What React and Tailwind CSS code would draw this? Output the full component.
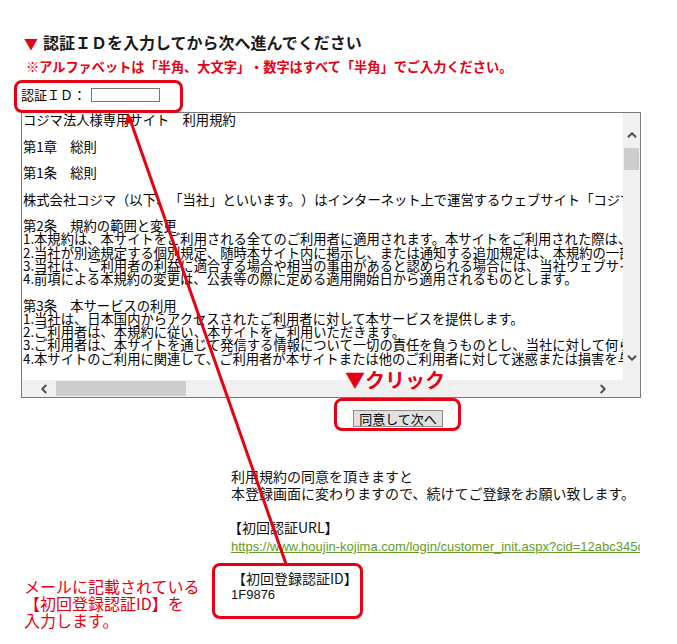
import React from "react";
import { ChevronUp, ChevronDown, ChevronLeft, ChevronRight } from "lucide-react";

const jp = { fontFamily: '"Noto Sans CJK JP", "Noto Sans", sans-serif' };

const terms = [
  "コジマ法人様専用サイト　利用規約",
  "",
  "第1章　総則",
  "",
  "第1条　総則",
  "",
  "株式会社コジマ（以下、「当社」といいます。）はインターネット上で運営するウェブサイト「コジマ法人様専用サイト」",
  "",
  "第2条　規約の範囲と変更",
  "1.本規約は、本サイトをご利用される全てのご利用者に適用されます。本サイトをご利用された際は、本規約に同意したものとみなします。",
  "2.当社が別途規定する個別規定、随時本サイト内に掲示し、または通知する追加規定は、本規約の一部を構成するものとします。",
  "3.当社は、ご利用者の利益に適合する場合や相当の事由があると認められる場合には、当社ウェブサイトへの掲示により本規約を変更します。",
  "4.前項による本規約の変更は、公表等の際に定める適用開始日から適用されるものとします。",
  "",
  "第3条　本サービスの利用",
  "1.当社は、日本国内からアクセスされたご利用者に対して本サービスを提供します。",
  "2.ご利用者は、本規約に従い、本サイトをご利用いただきます。",
  "3.ご利用者は、本サイトを通じて発信する情報について一切の責任を負うものとし、当社に対して何らの迷惑も及ぼさないものとします。",
  "4.本サイトのご利用に関連して、ご利用者が本サイトまたは他のご利用者に対して迷惑または損害を与えた場合",
];

const TermsBox = () => (
  <div className="w-[620px] h-[286px] border border-[#7a7a7a] grid grid-cols-[1fr_17px] grid-rows-[1fr_17px] bg-white">
    <div className="overflow-hidden pl-[1px] text-[13.3px] leading-[13.25px] text-black whitespace-nowrap" style={jp}>
      {terms.map((line, i) => (
        <div key={i} className="h-[13.25px]">
          {line}
        </div>
      ))}
    </div>
    <div className="bg-[#f0f0f0] flex flex-col items-center pt-[15px] pb-[15px]">
      <ChevronUp size={14} strokeWidth={3.5} className="text-[#505050]" />
      <div className="w-[15px] h-[22px] bg-[#cdcdcd] mt-[6px]" />
      <div className="flex-1" />
      <ChevronDown size={14} strokeWidth={3.5} className="text-[#505050]" />
    </div>
    <div className="bg-[#f0f0f0] flex items-center pl-[15px] pr-[13px]">
      <ChevronLeft size={14} strokeWidth={3.5} className="text-[#505050]" />
      <div className="w-[130px] h-[15px] bg-[#cdcdcd] ml-[5px]" />
      <div className="flex-1" />
      <ChevronRight size={14} strokeWidth={3.5} className="text-[#505050]" />
    </div>
    <div className="bg-[#f0f0f0]" />
  </div>
);

export default function App() {
  return (
    <div
      className="relative w-[677px] h-[644px] bg-white overflow-hidden [text-spacing-trim:space-all]"
      style={jp}
    >
      <main className="pl-[21px] pt-[32px]">
        {/* Heading */}
        <h2 className="pl-[3px] h-[20px] leading-[20px] text-[16px] font-bold text-[#1a1a1a]">
          <span className="text-[#e60012] mr-[5px] text-[14px]">▼</span>
          認証ＩＤを入力してから次へ進んでください
        </h2>
        <p className="mt-[6px] pl-[5px] h-[18px] leading-[18px] text-[13.2px] font-bold text-[#e60012]">
          ※アルファベットは「半角、大文字」・数字はすべて「半角」でご入力ください。
        </p>

        {/* ID row */}
        <div className="mt-[9px] h-[20px] flex items-center text-[13px] text-black">
          <label htmlFor="authId" className="leading-[20px]">認証ＩＤ：</label>
          <input
            id="authId"
            type="text"
            className="ml-[5px] w-[69px] h-[14px] border border-[#767676] bg-white outline-none"
          />
        </div>

        {/* Terms */}
        <div className="mt-[7px]">
          <TermsBox />
        </div>

        {/* Button */}
        <div className="mt-[7px] pl-[332px]">
          <button
            type="button"
            className="w-[90px] h-[17px] bg-[#e1e1e1] border border-[#8f8f8f] text-[13px] leading-[15px] text-black"
          >
            同意して次へ
          </button>
        </div>

        {/* Info */}
        <div className="mt-[39px] flex">
          <div className="w-[210px] pt-[110px] pl-[3px] text-[16px] leading-[17px] text-[#e60012]">
            <div>メールに記載されている</div>
            <div>【初回登録認証ID】を</div>
            <div>入力します。</div>
          </div>
          <div className="w-[409px] overflow-hidden text-[14px] leading-[17px] text-[#111]">
            <div>利用規約の同意を頂きますと</div>
            <div className="whitespace-nowrap">本登録画面に変わりますので、続けてご登録をお願い致します。</div>
            <div className="mt-[17px] -ml-[3px]">【初回認証URL】</div>
            <a
              href="#"
              className="block mt-[2px] whitespace-nowrap text-[13px] leading-[17px] text-[#5f9d25] underline"
              style={{ fontFamily: '"Liberation Sans", sans-serif' }}
            >
              https://www.houjin-kojima.com/login/customer_init.aspx?cid=12abc345c
            </a>
            <div className="mt-[15px] ml-[1px]">【初回登録認証ID】</div>
            <div className="text-[13px] leading-[15px]" style={{ fontFamily: '"Liberation Sans", sans-serif' }}>1F9876</div>
          </div>
        </div>
      </main>

      {/* Annotations */}
      <div className="absolute left-[14px] top-[80px] w-[169px] h-[33px] border-[3px] border-[#e60012] rounded-[8px]" />
      <div className="absolute left-[334px] top-[398px] w-[127px] h-[33px] border-[3px] border-[#e60012] rounded-[8px]" />
      <div className="absolute left-[212px] top-[563px] w-[151px] h-[56px] border-[3px] border-[#e60012] rounded-[8px]" />
      <div className="absolute left-[345px] top-[368px] text-[20px] leading-[24px] font-bold text-[#e60012] [text-shadow:0_0_2px_white,0_0_2px_white]">
        ▼クリック
      </div>
      <svg className="absolute left-0 top-0 pointer-events-none" width="677" height="644">
        <line x1="286" y1="564" x2="131" y2="122" stroke="#e60012" strokeWidth="3" />
        <polygon points="128,113 124,125 134,122" fill="#e60012" />
      </svg>
    </div>
  );
}
